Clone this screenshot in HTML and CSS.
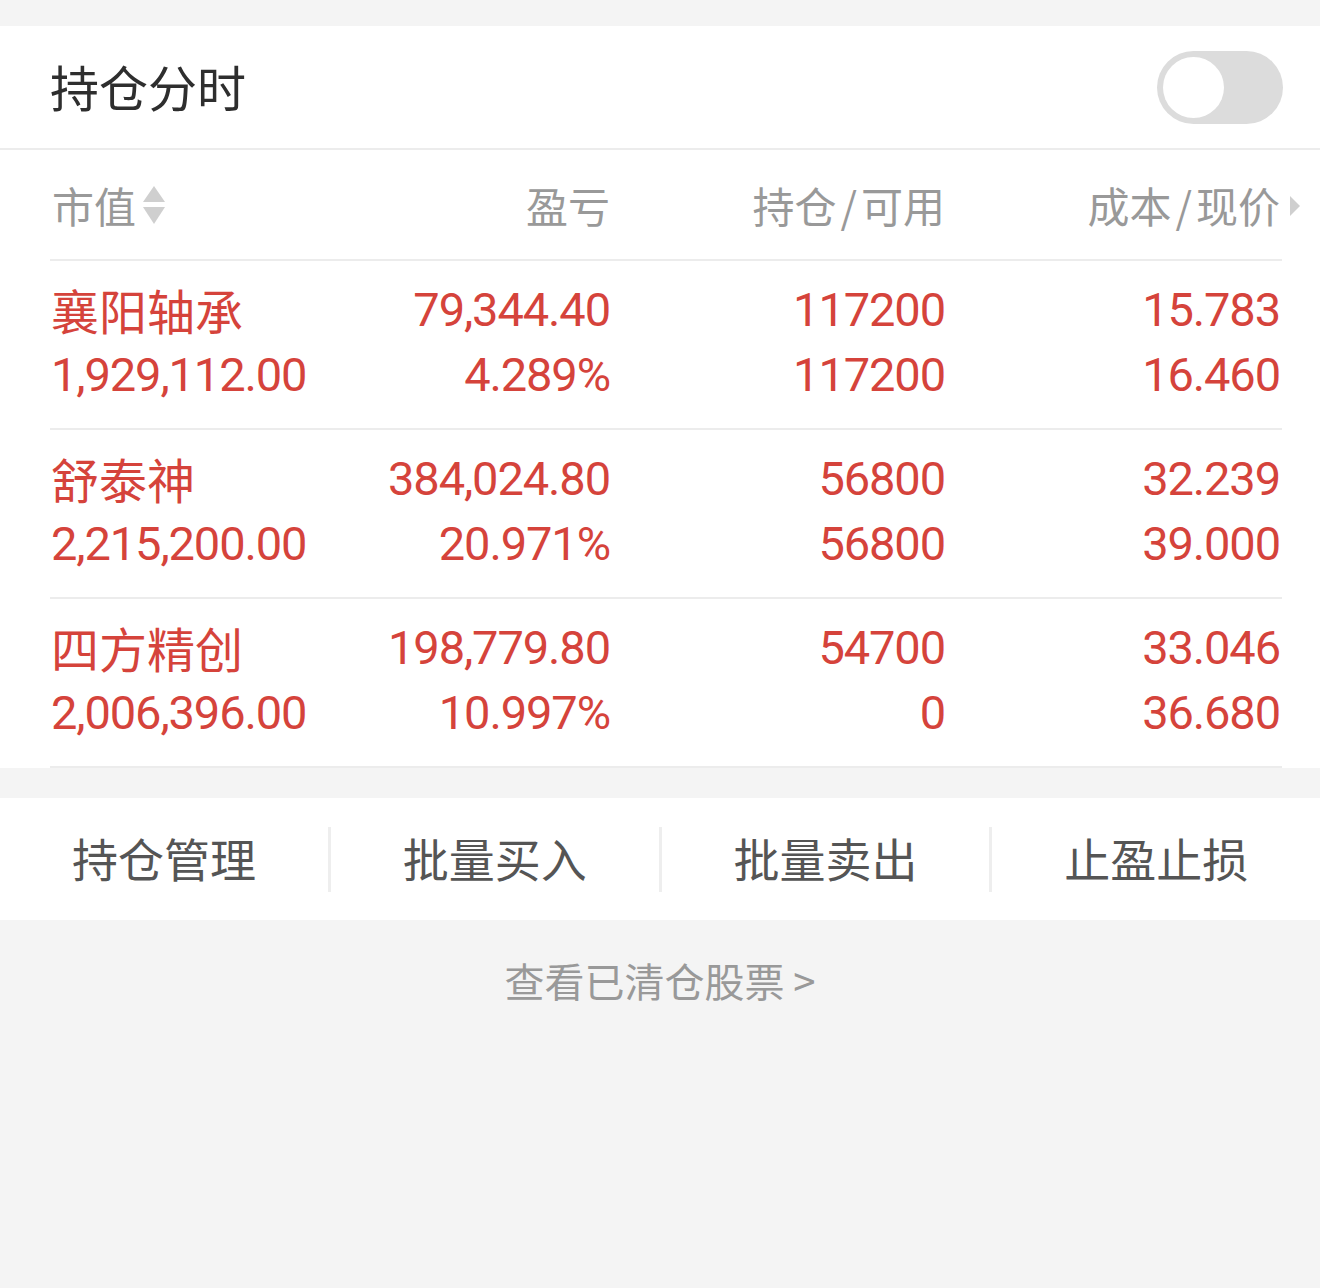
FILE: index.html
```html
<!doctype html>
<html lang="zh-CN">
  <head>
    <meta charset="utf-8">
    <title>持仓分时</title>
    <link rel="stylesheet" href="styles.css">
  </head>
  <body>
    <div class="gap-top"></div>

    <header class="bar">
      <h1>持仓分时</h1>
      <div class="switch"><span class="knob"></span></div>
    </header>

    <section class="holdings">
      <div class="thead">
        <div class="th first">市值<svg class="sort" width="24" height="40" viewBox="0 0 24 40"><path d="M12 1 L23 17 L1 17 Z" fill="#cfcfcf"/><path d="M1 22 L23 22 L12 39 Z" fill="#cfcfcf"/></svg></div>
        <div class="th">盈亏</div>
        <div class="th">持仓<span class="sl">/</span>可用</div>
        <div class="th last">成本<span class="sl">/</span>现价<svg class="more" width="12" height="22" viewBox="0 0 12 22"><path d="M1 1 L11 11 L1 21 Z" fill="#cfcfcf"/></svg></div>
      </div>

      <div class="row">
        <div class="cell first"><span class="name">襄阳轴承</span><span class="num">1,929,112.00</span></div>
        <div class="cell"><span class="num">79,344.40</span><span class="num">4.289%</span></div>
        <div class="cell"><span class="num">117200</span><span class="num">117200</span></div>
        <div class="cell"><span class="num">15.783</span><span class="num">16.460</span></div>
      </div>

      <div class="row">
        <div class="cell first"><span class="name">舒泰神</span><span class="num">2,215,200.00</span></div>
        <div class="cell"><span class="num">384,024.80</span><span class="num">20.971%</span></div>
        <div class="cell"><span class="num">56800</span><span class="num">56800</span></div>
        <div class="cell"><span class="num">32.239</span><span class="num">39.000</span></div>
      </div>

      <div class="row">
        <div class="cell first"><span class="name">四方精创</span><span class="num">2,006,396.00</span></div>
        <div class="cell"><span class="num">198,779.80</span><span class="num">10.997%</span></div>
        <div class="cell"><span class="num">54700</span><span class="num">0</span></div>
        <div class="cell"><span class="num">33.046</span><span class="num">36.680</span></div>
      </div>
    </section>

    <nav class="actions">
      <a class="act">持仓管理</a>
      <a class="act">批量买入</a>
      <a class="act">批量卖出</a>
      <a class="act">止盈止损</a>
    </nav>

    <p class="cleared">查看已清仓股票 &gt;</p>
  </body>
</html>
```

FILE: styles.css
```css
:root {
  --bg: #f4f4f4;
  --line: #ececec;
  --red: #d5433b;
  --muted: #999999;
}

html {
  background: var(--bg);
  font-family: "Noto Sans CJK SC", "Noto Sans", sans-serif;
  color: #333;
}

body {
  margin: 0;
  width: 1320px;
}

.gap-top {
  height: 26px;
}

.bar {
  height: 122px;
  background: #fff;
  border-bottom: 2px solid var(--line);
  display: flex;
  align-items: center;
  justify-content: space-between;
  padding: 0 37px 0 50px;
}

.bar h1 {
  margin: 0 0 4px;
  font-size: 49px;
  font-weight: 400;
  color: #2e2e2e;
}

.switch {
  width: 126px;
  height: 73px;
  border-radius: 37px;
  background: #dcdcdc;
  box-sizing: border-box;
  padding: 6px;
  display: flex;
  align-items: center;
}

.switch .knob {
  width: 61px;
  height: 61px;
  border-radius: 50%;
  background: #fff;
}

.holdings {
  background: #fff;
  padding: 0 38px 0 50px;
}

.thead,
.row {
  display: grid;
  grid-template-columns: 260px 300px 335px 337px;
  border-bottom: 2px solid var(--line);
}

.thead {
  height: 109px;
  align-items: center;
}

.th {
  font-size: 42px;
  color: var(--muted);
  text-align: right;
  white-space: nowrap;
  line-height: 1;
}

.th .sl {
  margin: 0 4px;
}

.th.first {
  text-align: left;
  padding-left: 2px;
  display: flex;
  align-items: center;
}

.th .sort {
  margin-left: 6px;
}

.th.last {
  position: relative;
  padding-right: 2px;
}

.th .more {
  position: absolute;
  right: -19px;
  top: 11px;
}

.row {
  padding-top: 16px;
  box-sizing: border-box;
  height: 169px;
}

.cell {
  display: flex;
  flex-direction: column;
  align-items: flex-end;
  color: var(--red);
}

.cell:last-child {
  padding-right: 2px;
}

.cell.first {
  align-items: flex-start;
  padding-left: 1px;
}

.cell span {
  height: 65px;
  line-height: 65px;
  white-space: nowrap;
}

.name {
  font-size: 48px;
}

.num {
  font-family: Roboto, "Liberation Sans", sans-serif;
  font-size: 47px;
  letter-spacing: -1.1px;
}

.actions {
  margin-top: 30px;
  height: 122px;
  background: #fff;
  display: flex;
  align-items: center;
}

.act {
  flex: 1;
  text-align: center;
  font-size: 46px;
  color: #555;
  line-height: 60px;
  padding-bottom: 5px;
  border-left: 3px solid #eeeeee;
}

.act:first-child {
  border-left: none;
}

.cleared {
  margin: 31px 0 0;
  text-align: center;
  font-size: 40px;
  color: var(--muted);
}
```
